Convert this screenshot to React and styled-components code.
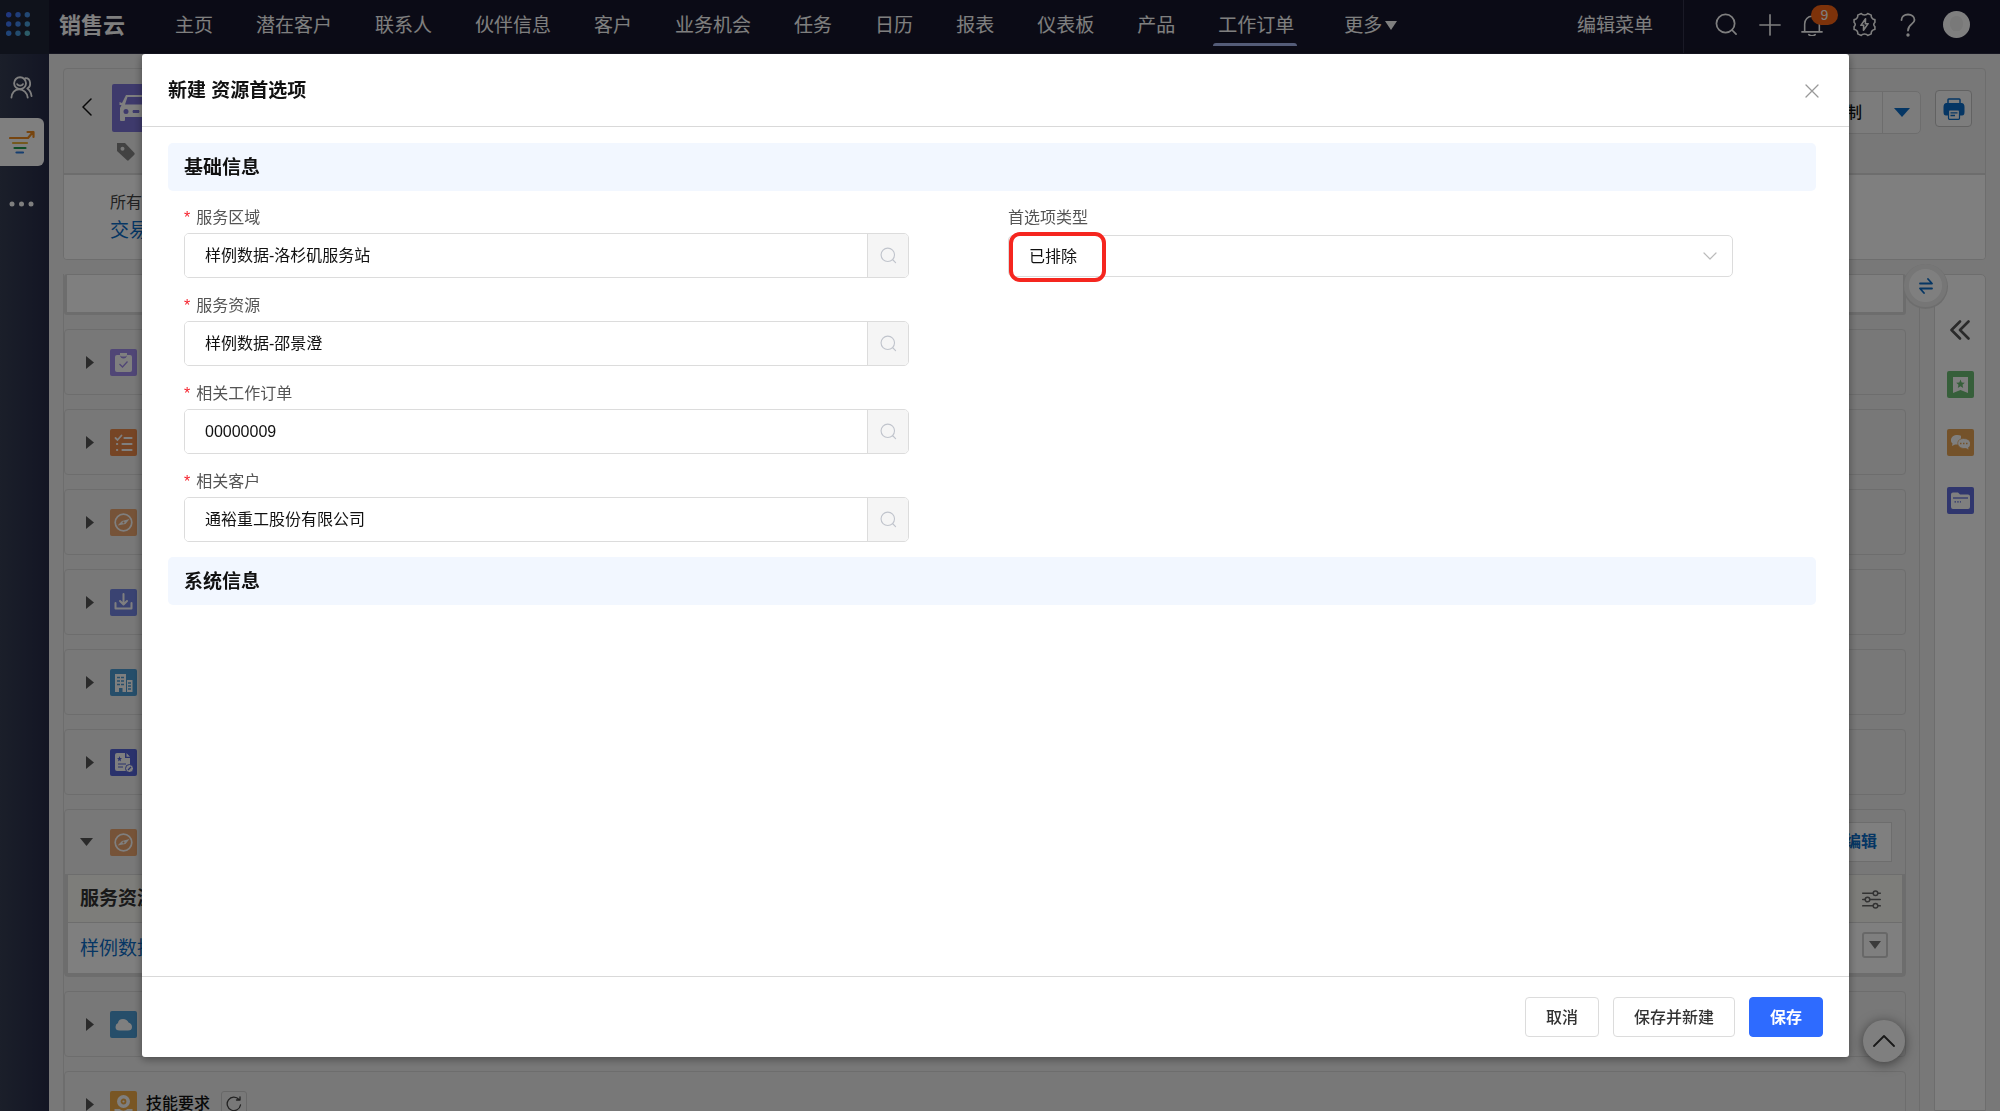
import React from "react";
import styled, { createGlobalStyle } from "styled-components";

const GlobalStyle = createGlobalStyle`
  *, *::before, *::after { box-sizing: border-box; }
  body { margin: 0; }
  body, button, input, select {
    font-family: "Liberation Sans", "Noto Sans CJK SC", sans-serif;
    font-size: 16px;
    line-height: 24px;
    color: #111;
  }
  button { margin: 0; padding: 0; border: 0; background: none; cursor: pointer; }
  ul { margin: 0; padding: 0; list-style: none; }
  h1, h2, p { margin: 0; }
  a { color: inherit; text-decoration: none; }
  svg { display: block; flex: none; }
`;

const line = "#dbdbdb";
const blue = "#0a6cc8";

/* ---------- shell ---------- */
const Shell = styled.div`
  display: grid;
  grid-template: 54px minmax(0, 1fr) / 49px minmax(0, 1fr);
  height: 100vh;
  overflow: hidden;
  background: #f0f0f0;
`;
const Launcher = styled.button`
  display: flex;
  align-items: center;
  padding: 0 0 6px 6px;
  background: #1f2437;
`;
const TopBar = styled.header`
  display: flex;
  align-items: center;
  padding: 0 27px 4px 10px;
  background: #17172c;
  border-bottom: 1px solid #2c2c44;
  color: #fff;
`;
const Brand = styled.div`
  width: 116px;
  padding-top: 2px;
  font-size: 22px;
  font-weight: 700;
`;
const Nav = styled.ul`
  display: flex;
  flex: 1;
  gap: 43px;
  padding-top: 2px;
  font-size: 19px;
`;
const NavItem = styled.li`
  position: relative;
  white-space: nowrap;
  margin-left: ${(p) => (p.$wide ? "7px" : "0")};
  a { display: flex; align-items: center; gap: 3px; }
`;
const Underline = styled.span`
  position: absolute;
  left: -5px;
  right: -3px;
  top: 29px;
  height: 3px;
  border-radius: 3px 3px 0 0;
  background: #a9b8f0;
`;
const EditMenu = styled.button`
  align-self: stretch;
  margin-bottom: -4px;
  padding: 0 30px 2px 0;
  border-right: 1px solid #34344c;
  color: #fff;
  font-size: 19px;
`;
const Tools = styled.div`
  display: flex;
  align-items: center;
  gap: 18px;
  padding-left: 29px;
`;
const Tool = styled.button`
  position: relative;
  display: flex;
  justify-content: ${(p) => (p.$start ? "flex-start" : "center")};
  width: ${(p) => p.$w || 26}px;
  color: #fff;
`;
const Badge = styled.span`
  position: absolute;
  left: 10px;
  top: -9px;
  width: 27px;
  height: 20px;
  border-radius: 10px;
  background: #fb6514;
  font-size: 14px;
  line-height: 20px;
  text-align: center;
`;
const Side = styled.nav`
  display: flex;
  flex-direction: column;
  align-items: flex-start;
  background: linear-gradient(90deg, #363e54, #262b48);
`;
const SideButton = styled.button`
  display: flex;
  align-items: center;
  justify-content: center;
  width: 44px;
  height: ${(p) => p.$h}px;
  padding: ${(p) => (p.$active ? "0 1px 0 0" : "2px 2px 0 0")};
  border-radius: 0 6px 6px 0;
  background: ${(p) => (p.$active ? "#fff" : "none")};
  color: #fff;
`;

/* ---------- record page ---------- */
const Main = styled.main`
  display: flex;
  flex-direction: column;
  gap: 14px;
  min-height: 0;
  padding: 14px 14px 0;
`;
const RecordHead = styled.section`
  flex: none;
  border: 1px solid ${line};
  border-radius: 4px;
  overflow: hidden;
`;
const RecordTop = styled.div`
  display: flex;
  height: 106px;
  padding: 15px 13px 0 16px;
  border-bottom: 2px solid ${line};
`;
const Back = styled.button`
  height: 46px;
  width: 18px;
`;
const RecordIcon = styled.div`
  display: flex;
  flex-direction: column;
  gap: 10px;
  flex: 1;
  padding-left: 14px;
`;
const Tag = styled.div`
  padding-left: 4px;
`;
const SplitButton = styled.div`
  display: flex;
  height: 43px;
  margin: 7px 14px 0 0;
  border: 1px solid ${line};
  border-radius: 5px;
  background: #f8f8f8;
`;
const SplitPart = styled.button`
  display: flex;
  align-items: center;
  justify-content: center;
  width: ${(p) => p.$w}px;
  font-weight: 500;
  border-left: ${(p) => (p.$line ? `1px solid ${line}` : "0")};
`;
const PrintButton = styled.button`
  display: flex;
  align-items: center;
  justify-content: center;
  width: 37px;
  height: 37px;
  margin-top: 6px;
  border: 1px solid #c4c4c4;
  border-radius: 4px;
  background: #fafafa;
`;
const RecordFacts = styled.div`
  height: 84px;
  padding: 16px 0 0 46px;
  background: #fff;
  color: #444;
  a { display: block; margin-top: 4px; font-size: 19px; color: ${blue}; }
`;
const Columns = styled.div`
  display: flex;
  flex: 1;
  gap: 14px;
  min-height: 0;
`;
const ListColumn = styled.div`
  display: flex;
  flex: 1;
  flex-direction: column;
  gap: 14px;
  padding-right: 13px;
  border: solid ${line};
  border-width: 0 1px;
  overflow: hidden;
`;
const TabStrip = styled.div`
  flex: none;
  height: 41px;
  border: 3px solid ${line};
  border-top-width: 1px;
  border-radius: 3px;
  background: #fff;
`;
const Card = styled.section`
  flex: none;
  border: 1px solid ${line};
  border-radius: 4px;
`;
const CardHead = styled.div`
  display: flex;
  align-items: center;
  height: 64px;
  padding: 0 13px 0 15px;
`;
const Toggle = styled.button`
  display: flex;
  justify-content: ${(p) => (p.$open ? "flex-start" : "center")};
  width: 20px;
  margin-right: 10px;
`;
const Tile = styled.span`
  display: flex;
  align-items: center;
  justify-content: center;
  width: ${(p) => p.$size || 27}px;
  height: ${(p) => p.$size || 27}px;
  border-radius: 2px;
  background: ${(p) => p.$color};
`;
const CardName = styled.h2`
  margin: 0 11px 0 9px;
  font-size: 16px;
  font-weight: 500;
`;
const SmallButton = styled.button`
  display: flex;
  align-items: center;
  justify-content: center;
  width: 26px;
  height: 26px;
  border: ${(p) => (p.$bold ? 2 : 1)}px solid #d0d0d0;
  border-radius: 3px;
`;
const EditButton = styled.button`
  height: 40px;
  margin-left: auto;
  padding: 0 14px;
  border: 1px solid ${line};
  background: #fff;
  color: ${blue};
  font-weight: 700;
`;
const Table = styled.table`
  width: 100%;
  border-collapse: collapse;
  border: 3px solid ${line};
  border-top-width: 1px;
  background: #fff;
  font-size: 19px;
  th, td { padding: 1px 14px 0 12px; text-align: left; }
  th { height: 48px; background: #fafaf5; border-bottom: 1px solid ${line}; color: #333; }
  td { height: 52px; color: ${blue}; }
  th svg { margin: 0 7px 0 auto; }
  td button { margin: 0 0 8px auto; }
`;
const Dock = styled.aside`
  display: flex;
  flex-direction: column;
  align-items: center;
  gap: 31px;
  width: 52px;
  padding-top: 45px;
  border: 1px solid ${line};
  border-radius: 5px 5px 0 0;
  background: #fff;
`;
const Swap = styled.button`
  position: absolute;
  right: 53px;
  top: 264px;
  display: flex;
  align-items: center;
  justify-content: center;
  width: 43px;
  height: 43px;
  border: 5px solid #ececec;
  border-radius: 50%;
  background: #fff;
  box-shadow: 0 1px 0 1px ${line};
`;
const ToTop = styled.button`
  position: absolute;
  right: 95px;
  bottom: 49px;
  display: flex;
  align-items: center;
  justify-content: center;
  width: 42px;
  height: 42px;
  border-radius: 50%;
  background: #fff;
  box-shadow: 0 2px 12px rgba(0, 0, 0, 0.5);
`;

/* ---------- dialog ---------- */
const Overlay = styled.div`
  position: fixed;
  inset: 0;
  display: flex;
  padding: 54px 151px 54px 142px;
  background: rgba(0, 0, 0, 0.5);
`;
const Dialog = styled.form`
  display: flex;
  flex: 1;
  flex-direction: column;
  border-radius: 3px;
  background: #fff;
  box-shadow: 0 2px 8px rgba(0, 0, 0, 0.4);
`;
const DialogHead = styled.header`
  display: flex;
  align-items: center;
  justify-content: space-between;
  height: 73px;
  padding: 2px 30px 0 26px;
  border-bottom: 1px solid #d9d9d9;
  h1 { font-size: 19px; line-height: 28px; }
`;
const DialogBody = styled.div`
  flex: 1;
  padding: 16px 33px 16px 26px;
`;
const SectionTitle = styled.h2`
  padding: 11px 16px 9px;
  border-radius: 5px;
  background: #f2f7ff;
  font-size: 19px;
  line-height: 28px;
`;
const Fields = styled.div`
  display: grid;
  grid-template-columns: 1fr 1fr;
  padding: 14px 0 15px;
`;
const FieldColumn = styled.div`
  display: flex;
  flex-direction: column;
  gap: 15px;
  padding: 0 83px 0 16px;
`;
const Field = styled.div`
  display: flex;
  flex-direction: column;
  gap: 2px;
  position: relative;
`;
const Label = styled.label`
  line-height: 26px;
  color: #555;
  span { margin-right: 6px; color: #f5222d; }
`;
const Lookup = styled.div`
  display: flex;
  height: 45px;
  border: 1px solid #dcdcdc;
  border-radius: 5px;
  overflow: hidden;
  input { flex: 1; min-width: 0; padding: 1px 20px 0; border: 0; outline: 0; background: #fff; }
  button {
    display: flex;
    align-items: center;
    justify-content: center;
    width: 41px;
    border-left: 1px solid #dcdcdc;
    background: #f5f5f5;
    color: #c0c4cc;
  }
`;
const SelectBox = styled.div`
  display: flex;
  align-items: center;
  height: 42px;
  margin-top: 2px;
  padding-right: 15px;
  border: 1px solid #dcdcdc;
  border-radius: 5px;
  select {
    flex: 1;
    height: 40px;
    padding: 1px 20px 0;
    border: 0;
    outline: 0;
    appearance: none;
    background: none;
  }
`;
const Highlight = styled.span`
  position: absolute;
  left: 1px;
  bottom: -5px;
  width: 97px;
  height: 50px;
  border: 4px solid #f5261f;
  border-radius: 11px;
  pointer-events: none;
`;
const DialogFoot = styled.footer`
  display: flex;
  justify-content: flex-end;
  gap: 14px;
  padding: 20px 26px;
  border-top: 1px solid #d9d9d9;
`;
const Action = styled.button`
  height: 40px;
  padding: 1px 20px 0;
  border: 1px solid ${(p) => (p.$primary ? "#2e6bff" : "#dcdcdc")};
  border-radius: 4px;
  background: ${(p) => (p.$primary ? "#2e6bff" : "#fff")};
  color: ${(p) => (p.$primary ? "#fff" : "#333")};
  font-weight: ${(p) => (p.$primary ? 700 : 500)};
`;

/* ---------- icons ---------- */
const Stroke = ({ w = 24, h, box = "0 0 24 24", sw = 1.5, color = "currentColor", children }) => (
  <svg width={w} height={h || w} viewBox={box} fill="none" stroke={color} strokeWidth={sw} strokeLinecap="round" strokeLinejoin="round" aria-hidden="true">
    {children}
  </svg>
);
const Caret = ({ right, w = 13, h = 8, color = "#555" }) => (
  <svg width={right ? 8 : w} height={right ? 13 : h} viewBox="0 0 10 10" preserveAspectRatio="none" fill={color} aria-hidden="true">
    <path d={right ? "M0 0L10 5L0 10Z" : "M0 0H10L5 10Z"} />
  </svg>
);
const SearchIcon = ({ size = 22, sw = 1.8 }) => (
  <Stroke w={size} sw={sw}>
    <circle cx="11" cy="11" r="9.5" />
    <path d="M18 18L22 22" />
  </Stroke>
);
const dotColors = ["#3f6fff", "#3f7cf5", "#4490e8", "#3f78f8", "#4288ee", "#4ba0dc", "#3f88f0", "#4698dc", "#58b8d0"];
const DotsIcon = () => (
  <svg width="24" height="24" viewBox="0 0 24 24" aria-hidden="true">
    {dotColors.map((c, i) => (
      <circle key={i} cx={2.7 + (i % 3) * 9.3} cy={2.7 + Math.floor(i / 3) * 9.3} r="2.7" fill={c} />
    ))}
  </svg>
);
const BellIcon = () => (
  <Stroke w={22} sw={1.7}>
    <path d="M1 19.5H23M4 19.5V11C4 6 7.5 2.500 12 2.500S20 6 20 11V19.500" />
    <path d="M8.500 22.500C10.500 24 13.500 24 15.500 22.500" />
  </Stroke>
);
const GearIcon = () => (
  <Stroke w={25} sw={1.5}>
    <path d="M9 1.500C10 3.300 14 3.300 15 1.500L18.500 3C18 5 20 7.500 22 7.200V10C20.500 11 20.500 13 22 14V16.800C20 16.500 18 19 18.500 21L15 22.500C14 20.700 10 20.700 9 22.500L5.500 21C6 19 4 16.500 2 16.800V14C3.500 13 3.500 11 2 10V7.200C4 7.500 6 5 5.500 3Z" />
    <path d="M13 6.500L8.500 12.800H11.200L11 17.500L15.500 11.200H12.800Z" />
  </Stroke>
);
const HelpIcon = () => (
  <svg width="16" height="24" viewBox="0 0 16 24" fill="none" stroke="currentColor" strokeWidth="1.800" strokeLinecap="round" aria-hidden="true">
    <path d="M1.500 7C1.500 3.500 4.500 1.500 8 1.500S14.500 3.500 14.500 7C14.500 11 8 11 8 17.500" />
    <circle cx="8" cy="22" r=".8" fill="currentColor" />
  </svg>
);
const PeopleIcon = () => (
  <Stroke w={23} sw={1.9}>
    <circle cx="10.500" cy="7.500" r="6.200" />
    <path d="M7.500 8.500C8.500 10.500 12.500 10.500 13.500 8.500M1.500 22.500C1.800 17.500 5 13.800 9.500 13.800S18 17.500 18.500 22.500" />
    <path d="M16 2.200C22 2 22.500 11 18 13C20.500 14.500 22 17 22.500 21" />
  </Stroke>
);
const FunnelIcon = () => (
  <svg width="26" height="24" viewBox="0 0 26 24" fill="none" strokeWidth="2.200" strokeLinecap="round" strokeLinejoin="round" aria-hidden="true">
    <path d="M1 8H19L24 2M18.500 2H24.500V7" stroke="#ef8b1e" />
    <path d="M4 13H18" stroke="#e8b33c" />
    <path d="M5.500 18H16.500" stroke="#1f9b4a" />
    <path d="M7.500 22.500H14" stroke="#2b7de0" />
  </svg>
);
const MoreIcon = () => (
  <svg width="25" height="6" viewBox="0 0 25 6" fill="#fff" aria-hidden="true">
    <circle cx="3" cy="3" r="2.500" /><circle cx="12.500" cy="3" r="2.500" /><circle cx="22" cy="3" r="2.500" />
  </svg>
);
const CarIcon = () => (
  <svg width="34" height="28" viewBox="0 0 34 28" fill="#fff" aria-hidden="true">
    <path fillRule="evenodd" d="M7 1H27L31 9L33.500 8V11H31.500L33 14V26Q33 27 32 27H29Q28 27 28 26V23H6V26Q6 27 5 27H2Q1 27 1 26V14L2.500 11H.5V8L3 9ZM8.500 3L6 10.500H28L25.500 3ZM7 15A2.500 2.500 0 1 0 7 20A2.500 2.500 0 0 0 7 15ZM14 16Q13 17.500 14 19H20Q21 17.500 20 16ZM27 15A2.500 2.500 0 1 0 27 20A2.500 2.500 0 0 0 27 15Z" />
  </svg>
);
const TagIcon = () => (
  <svg width="19" height="19" viewBox="0 0 19 19" fill="#858585" aria-hidden="true">
    <path fillRule="evenodd" d="M1 1H9L18.500 11Q19 12 18.300 12.700L12.700 18.300Q12 19 11 18.300L1 9ZM6.500 4.800A2 2 0 1 0 6.500 8.800A2 2 0 0 0 6.500 4.800Z" />
  </svg>
);
const PrinterIcon = () => (
  <svg width="22" height="22" viewBox="0 0 22 22" fill="none" aria-hidden="true">
    <path d="M5 6V1.800Q5 1 5.800 1H16.200Q17 1 17 1.800V6" stroke={blue} strokeWidth="1.500" />
    <path d="M3 5H19Q21.500 5.500 21.500 9V14Q21.500 17.500 19 17.500H3Q.5 17.500 .5 14V9Q.5 5.500 3 5Z" fill={blue} />
    <rect x="5.500" y="12" width="11" height="9.300" rx="1" fill="#fafafa" stroke={blue} strokeWidth="1.200" />
    <path d="M7.500 14.800H14.500M7.500 17.500H12" stroke={blue} strokeWidth="1.300" />
  </svg>
);
const glyphs = {
  clipboard: (c) => (
    <>
      <path d="M3 2H6Q6.500 5.500 9.500 5.500T13 2H16Q18 2 18 4V17Q18 19 16 19H3Q1 19 1 17V4Q1 2 3 2Z" fill="#fff" />
      <path d="M6 0H13V2Q13 3.500 9.500 3.500T6 2Z" fill="#fff" />
      <path d="M5.500 11L8.500 14L13.500 8.500" fill="none" stroke={c} strokeWidth="1.300" />
    </>
  ),
  checklist: () => (
    <g fill="none" stroke="#fff" strokeWidth="2.200" strokeLinecap="round">
      <path d="M1.500 5L3.500 7L7.500 2.500" strokeWidth="1.800" />
      <path d="M10.500 5H17.500M8.500 11H17.500M3 11H3.200M8.500 17H17.500M3 17H3.200" />
    </g>
  ),
  compass: () => (
    <>
      <circle cx="9.500" cy="9.500" r="8.300" fill="none" stroke="#fff" strokeWidth="1.700" />
      <path fillRule="evenodd" d="M3.500 12.500L8 8L15.500 6L11.500 11Z M9.500 8.500A1 1 0 1 0 9.500 10.500A1 1 0 0 0 9.500 8.500Z" fill="#fff" />
    </>
  ),
  inbox: () => (
    <path d="M9.500 1V11M6 8L9.500 11.500L13 8M1.500 10V15.500H17.500V10" fill="none" stroke="#fff" strokeWidth="2" strokeLinejoin="round" strokeLinecap="round" />
  ),
  building: (c) => (
    <>
      <path d="M1 1H12V19H8.500V15H5V19H1ZM13 7H18.500V19H13Z" fill="#fff" />
      <path d="M3 4.500H10M3 8H10M3 11.500H10M14 10H17.500M14 13H17.500M14 16H17.500" stroke={c} strokeWidth="1.500" strokeDasharray="3 1" />
    </>
  ),
  report: (c) => (
    <>
      <path d="M3 0H11V5H16V18H3Q1 18 1 16V2Q1 0 3 0ZM12.500 0L16 3.800H12.500Z" fill="#fff" />
      <path d="M4 11H12M4 14H9" stroke={c} strokeWidth="1.200" />
      <path d="M5.500 3L6.200 5L8 5.200L6.500 6.500L7 8.500L5.500 7.300L4 8.500L4.500 6.500L3 5.200L4.800 5Z" fill={c} />
      <circle cx="15.500" cy="15.500" r="4" fill="#fff" stroke={c} />
      <path d="M14 17L17 14" stroke={c} strokeWidth="1.300" />
    </>
  ),
  cloud: () => <path d="M5.500 15.500Q1.500 15.500 1.500 12Q1.500 9 4 8Q4.500 4 9 4Q13 4 14.500 7.500Q18 8.500 18 12Q18 15.500 14 15.500Z" fill="#fff" />,
  skill: (c) => (
    <>
      <path d="M.5 14H5.500Q9.500 17.500 13.500 14H18.500V18Q18.500 19 17.500 19H1.500Q.5 19 .5 18Z" fill="#fff" />
      <circle cx="9.500" cy="6.500" r="6.500" fill="#fff" />
      <circle cx="9.500" cy="6.500" r="2" fill="none" stroke={c} strokeWidth="1.800" />
    </>
  ),
  bookmark: (c) => (
    <>
      <path d="M2 2H17V18L9.500 15L2 18Z" fill="#fff" />
      <path d="M9.500 4.500L10.700 7.500L13.800 7.800L11.500 9.800L12.200 13L9.500 11.300L6.800 13L7.500 9.800L5.200 7.800L8.300 7.500Z" fill={c} />
    </>
  ),
  chat: (c) => (
    <>
      <path d="M6.500 2C-.5 2-1.500 8.500 1.500 10.500L1 13L4 11.500H10V2.800Q8.500 2 6.500 2Z" fill="#fff" />
      <path d="M12.500 5.500C21 5.500 20.500 13 17.500 14.500L18 17L15 15.500C5 16.500 4 5.500 12.500 5.500Z" fill="#fff" stroke={c} strokeWidth=".7" />
      <path d="M9 10.500H16.500" stroke={c} strokeWidth="1.500" strokeDasharray="1.500 1.500" />
    </>
  ),
  folder: (c) => (
    <>
      <path d="M2 1.500H7L9 3.500H17Q19 3.500 19 5.500V16Q19 18 17 18H2Q0 18 0 16V3.500Q0 1.500 2 1.500Z" fill="#fff" />
      <path d="M2 7H17" stroke={c} strokeWidth="1.300" />
      <path d="M3.500 10.800H10" stroke={c} strokeWidth="1.300" strokeDasharray="1.500 1.200" />
    </>
  ),
};
const GlyphTile = ({ name, color }) => (
  <Tile $color={color}>
    <svg width="19" height="19" viewBox="0 0 19 19" aria-hidden="true">{glyphs[name](color)}</svg>
  </Tile>
);

/* ---------- content ---------- */
const menu = ["主页", "潜在客户", "联系人", "伙伴信息", "客户", "业务机会", "任务", "日历", "报表", "仪表板", "产品", "工作订单"];
const cards = [
  ["clipboard", "#a08cec"],
  ["checklist", "#ec8a4a"],
  ["compass", "#eca670"],
  ["inbox", "#7486e4"],
  ["building", "#4c9cd4"],
  ["report", "#5464d8"],
];
const lookups = [
  ["area", "服务区域", "样例数据-洛杉矶服务站"],
  ["resource", "服务资源", "样例数据-邵景澄"],
  ["order", "相关工作订单", "00000009"],
  ["customer", "相关客户", "通裕重工股份有限公司"],
];

const RelatedCard = ({ icon, color, open, action, name, children }) => (
  <Card>
    <CardHead>
      <Toggle type="button" $open={open} aria-expanded={!!open} aria-label="展开">
        <Caret right={!open} />
      </Toggle>
      <GlyphTile name={icon} color={color} />
      {name}
      {action}
    </CardHead>
    {children}
  </Card>
);

export default function App() {
  return (
    <>
      <GlobalStyle />
      <Shell>
        <Launcher aria-label="应用"><DotsIcon /></Launcher>
        <TopBar>
          <Brand>销售云</Brand>
          <Nav>
            {menu.map((m) => (
              <NavItem key={m}>
                <a href="#menu">{m}</a>
                {m === "工作订单" && <Underline />}
              </NavItem>
            ))}
            <NavItem $wide><a href="#more">更多<Caret w={12} h={9} color="#fff" /></a></NavItem>
          </Nav>
          <EditMenu>编辑菜单</EditMenu>
          <Tools>
            <Tool aria-label="搜索"><SearchIcon size={23} /></Tool>
            <Tool aria-label="新增"><Stroke w={22} sw={1.8}><path d="M12 1V23M1 12H23" /></Stroke></Tool>
            <Tool $start $w={32} aria-label="通知"><BellIcon /><Badge>9</Badge></Tool>
            <Tool aria-label="设置"><GearIcon /></Tool>
            <Tool aria-label="帮助"><HelpIcon /></Tool>
            <Tool $w={34} aria-label="账户">
              <svg width="27" height="27" viewBox="0 0 27 27" aria-hidden="true">
                <circle cx="13.500" cy="13.500" r="13.500" fill="#fff" />
                <path d="M13.500 5C8.500 5 7 9 7 13S9 18 10.500 20H16.500C18 18 20 17 20 13S18.500 5 13.500 5Z" fill="#f2f2f2" />
              </svg>
            </Tool>
          </Tools>
        </TopBar>
        <Side>
          <SideButton $h={64} aria-label="联系人"><PeopleIcon /></SideButton>
          <SideButton $h={48} $active aria-label="销售云"><FunnelIcon /></SideButton>
          <SideButton $h={74} aria-label="更多"><MoreIcon /></SideButton>
        </Side>
        <Main>
          <RecordHead>
            <RecordTop>
              <Back aria-label="返回">
                <Stroke w={18} h={18} box="0 0 18 18" sw={1.5}><path d="M11 1L3 9L11 17" /></Stroke>
              </Back>
              <RecordIcon>
                <Tile $color="#7c74d8" $size={48}><CarIcon /></Tile>
                <Tag><TagIcon /></Tag>
              </RecordIcon>
              <SplitButton>
                <SplitPart $w={72}>复制</SplitPart>
                <SplitPart $w={38} $line aria-label="更多操作"><Caret w={16} h={9} color={blue} /></SplitPart>
              </SplitButton>
              <PrintButton aria-label="打印"><PrinterIcon /></PrintButton>
            </RecordTop>
            <RecordFacts>
              <p>所有</p>
              <a href="#type">交易</a>
            </RecordFacts>
          </RecordHead>
          <Columns>
            <ListColumn>
              <TabStrip />
              {cards.map(([icon, color]) => (
                <RelatedCard key={icon} icon={icon} color={color} />
              ))}
              <RelatedCard icon="compass" color="#eca670" open action={<EditButton>编辑</EditButton>}>
                <Table>
                  <thead>
                    <tr>
                      <th>服务资源</th>
                      <th>
                        <Stroke w={19} h={19} box="0 0 19 19" sw={1.5} color="#666">
                          <path d="M.7 3.200H11M16 3.200H18.300M.7 9.500H3M8 9.500H18.300M.7 15.800H11M16 15.800H18.300" />
                          <circle cx="13.500" cy="3.200" r="2.300" />
                          <circle cx="5.500" cy="9.500" r="2.300" />
                          <circle cx="13.500" cy="15.800" r="2.300" />
                        </Stroke>
                      </th>
                    </tr>
                  </thead>
                  <tbody>
                    <tr>
                      <td><a href="#resource">样例数据</a></td>
                      <td><SmallButton $bold aria-label="行操作"><Caret w={12} h={8} color="#777" /></SmallButton></td>
                    </tr>
                  </tbody>
                </Table>
              </RelatedCard>
              <RelatedCard icon="cloud" color="#4c9cd4" />
              <RelatedCard
                icon="skill"
                color="#f2ac48"
                name={
                  <>
                    <CardName>技能要求</CardName>
                    <SmallButton aria-label="刷新">
                      <Stroke w={16} h={16} box="0 0 16 16" sw={1.3} color="#444">
                        <path d="M14.500 9A6.700 6.700 0 1 1 13 3.500M14 .8V4H10.500" />
                      </Stroke>
                    </SmallButton>
                  </>
                }
              />
            </ListColumn>
            <Dock>
              <button aria-label="展开面板">
                <Stroke w={20} h={20} box="0 0 20 20" sw={2.6} color="#555"><path d="M10 1.500L1.500 10L10 18.500M18.500 1.500L10 10L18.500 18.500" /></Stroke>
              </button>
              <button aria-label="收藏"><GlyphTile name="bookmark" color="#6cbe74" /></button>
              <button aria-label="讨论"><GlyphTile name="chat" color="#e8a454" /></button>
              <button aria-label="文件"><GlyphTile name="folder" color="#606cdc" /></button>
            </Dock>
          </Columns>
        </Main>
      </Shell>
      <Swap aria-label="切换">
        <Stroke w={14} h={16} box="0 0 14 16" sw={1.8} color={blue}><path d="M1 5.500H13L9 1M13 10.500H1L5 15" /></Stroke>
      </Swap>
      <ToTop aria-label="回到顶部">
        <Stroke w={22} h={12} box="0 0 22 12" sw={1.8} color="#333"><path d="M1 11L11 1L21 11" /></Stroke>
      </ToTop>

      <Overlay>
        <Dialog role="dialog" aria-labelledby="dialog-title" onSubmit={(e) => e.preventDefault()}>
          <DialogHead>
            <h1 id="dialog-title">新建 资源首选项</h1>
            <button type="button" aria-label="关闭">
              <Stroke w={14} h={14} box="0 0 14 14" sw={1.3} color="#999"><path d="M1 1L13 13M13 1L1 13" /></Stroke>
            </button>
          </DialogHead>
          <DialogBody>
            <SectionTitle>基础信息</SectionTitle>
            <Fields>
              <FieldColumn>
                {lookups.map(([id, label, value]) => (
                  <Field key={id}>
                    <Label htmlFor={id}><span>*</span>{label}</Label>
                    <Lookup>
                      <input id={id} type="text" defaultValue={value} />
                      <button type="button" aria-label={`查找${label}`}><SearchIcon size={17} sw={1.6} /></button>
                    </Lookup>
                  </Field>
                ))}
              </FieldColumn>
              <FieldColumn>
                <Field>
                  <Label htmlFor="kind">首选项类型</Label>
                  <SelectBox>
                    <select id="kind" defaultValue="excluded">
                      <option value="excluded">已排除</option>
                    </select>
                    <Stroke w={14} h={8} box="0 0 14 8" sw={1.2} color="#bbb"><path d="M1 1L7 7L13 1" /></Stroke>
                  </SelectBox>
                  <Highlight />
                </Field>
              </FieldColumn>
            </Fields>
            <SectionTitle>系统信息</SectionTitle>
          </DialogBody>
          <DialogFoot>
            <Action type="button">取消</Action>
            <Action type="button">保存并新建</Action>
            <Action $primary>保存</Action>
          </DialogFoot>
        </Dialog>
      </Overlay>
    </>
  );
}
